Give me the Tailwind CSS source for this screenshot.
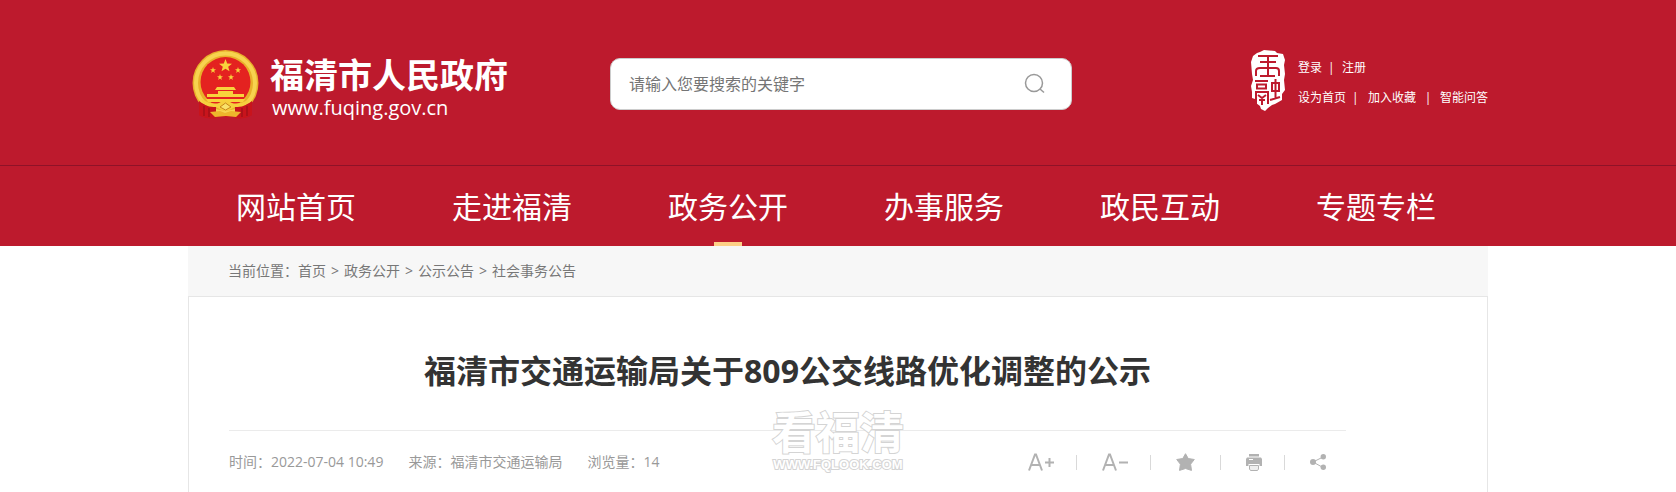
<!DOCTYPE html>
<html lang="zh-CN">
<head>
    <meta charset="UTF-8">
    <meta name="viewport" content="width=device-width, initial-scale=1.0">
    <title>福清市交通运输局关于809公交线路优化调整的公示</title>
    <script src="https://cdn.jsdelivr.net/npm/@tailwindcss/browser@4"></script>
</head>
<body class="bg-white font-['Open_Sans','Noto_Sans_CJK_SC',sans-serif] text-sm text-[#333]">
    <header class="bg-[#bd1a2d] text-white">
        <!-- Logo, search and account links -->
        <div class="mx-auto flex h-[165px] max-w-[1300px] items-start">
            <a href="#" class="mt-[50px] ml-1 flex">
                <svg class="h-[69px] w-[67px] shrink-0" viewBox="0 0 67 69" aria-hidden="true">
                    <path d="M9 49 L58 49 L60 65 Q50 70 42 67 L24 67 Q16 70 7 65 Z" fill="#c8141c"/>
                    <circle cx="33.500" cy="33" r="33" fill="#e9b02b"/>
                    <circle cx="33.500" cy="33" r="29.500" fill="none" stroke="#f7d34f" stroke-width="4"/>
                    <circle cx="33.500" cy="32" r="25" fill="#e42220"/>
                    <path d="M7 51 Q14 57 24 56 L24 68 Q16 70 7 65 Z M60 51 Q53 57 43 56 L43 68 Q51 70 60 65 Z" fill="#c8141c"/>
                    <path d="M12 56 V66 M17 58 V67 M50 58 V67 M55 56 V66" stroke="#8f0f16" stroke-width="1"/>
                    <path d="M33.500 9 L35.200 13.500 L40 13.700 L36.200 16.700 L37.500 21.300 L33.500 18.700 L29.500 21.300 L30.800 16.700 L27 13.700 L31.800 13.500 Z" fill="#f8d23c"/>
                    <g fill="#f8d23c">
                        <path id="s" d="M21 17 L21.800 19.300 L24 19.300 L22.200 20.700 L22.900 23 L21 21.600 L19.100 23 L19.800 20.700 L18 19.300 L20.200 19.300 Z"/>
                        <use href="#s" x="25"/>
                        <use href="#s" x="7" y="7"/>
                        <use href="#s" x="18" y="7"/>
                    </g>
                    <path d="M25 37 H42 L44 40 H23 Z M26 41 H41 V44 H52 V47 H15 V44 H26 Z M14 49 H53 L51 52 H16 Z" fill="#f8d23c"/>
                    <path d="M9 49 Q20 55 27 53 Q33 48 40 53 Q47 55 58 49 Q55 58 43 57 Q33 64 24 57 Q12 58 9 49 Z" fill="#f6cf3d"/>
                    <path d="M28 57 L33.500 53 L39 57 L33.500 60 Z" fill="#f9e26a" stroke="#c9861a" stroke-width="1"/>
                    <path d="M18 62 L28 61 L33 63 L39 61 L49 62 L44 67 L34 66 L23 67 Z" fill="#eeb52c"/>
                </svg>
                <span class="ml-[11px] flex flex-col">
                    <strong class="text-[34px] leading-[50px] font-bold">福清市人民政府</strong>
                    <span class="ml-[2px] text-xl leading-4">www.fuqing.gov.cn</span>
                </span>
            </a>
            <form class="mt-[58px] ml-[102px] flex h-[52px] w-[462px] items-center rounded-[10px] border border-[#ccc] bg-white pr-6 pl-[18px]">
                <input type="text" aria-label="搜索关键字" placeholder="请输入您要搜索的关键字" class="h-full min-w-0 flex-1 text-base text-[#333] outline-none placeholder:text-[#757575]">
                <button type="button" aria-label="搜索" class="size-6">
                    <svg class="size-6" viewBox="0 0 24 24" fill="none" stroke="#999" stroke-width="1.500">
                        <circle cx="11" cy="11" r="8.500"/>
                        <path d="M17 17 L21 20.500"/>
                    </svg>
                </button>
            </form>
            <div class="mt-[50px] ml-auto flex">
                <svg class="h-[62px] w-9" viewBox="0 0 36 62" aria-hidden="true">
                    <path d="M7 3 L10 2 L14 0 L25 1 L27 3 L33 4 L35 10 L34 15 L35 24 L34 30 L35 40 L32 44 L32 50 L25 54 L22 55 L18 58 L15 61 L11 59 L10 56 L6 53 L5 49 L2 48 L2 42 L1 36 L3 30 L2 24 L1 12 L3 6 Z" fill="#fff"/>
                    <g fill="none" stroke="#bd1a2d" stroke-width="2">
                        <path d="M8 6 H28 M18 6 V26 M10 12 H26 M6 26 V21 Q6 18 10 18 H26 Q29 18 29 21 V26 M10 26 H25"/>
                        <path d="M5 31 H18 M7 34.500 H16 V38.500 H7 Z M6 54 V42 H18 V54 M8 45 L12 48 L16 45 M9 50 H15 M12 50 V55 M22 33 H29 V41 H22 Z M25.500 29 V49 M20 50 L30 47"/>
                    </g>
                </svg>
                <div class="ml-3 flex flex-col pt-[3px] text-xs leading-[30px]">
                    <div class="flex">
                        <a href="#">登录</a><span class="w-5 pl-1.5">|</span><a href="#">注册</a>
                    </div>
                    <div class="flex">
                        <a href="#">设为首页</a><span class="w-[22px] pl-1.5">|</span><a href="#">加入收藏</a><span class="w-6 text-center">|</span><a href="#">智能问答</a>
                    </div>
                </div>
            </div>
        </div>

        <!-- Main navigation -->
        <nav class="border-t border-[#8f1228]">
            <ul class="mx-auto flex h-20 max-w-[1300px] pr-1 text-center text-[30px] leading-[82px]">
                <li class="flex-1"><a href="#">网站首页</a></li>
                <li class="flex-1"><a href="#">走进福清</a></li>
                <li class="relative flex-1">
                    <a href="#">政务公开</a>
                    <span class="absolute top-[76px] left-1/2 h-1 w-7 -translate-x-1/2 bg-[#fdd087]"></span>
                </li>
                <li class="flex-1"><a href="#">办事服务</a></li>
                <li class="flex-1"><a href="#">政民互动</a></li>
                <li class="flex-1"><a href="#">专题专栏</a></li>
            </ul>
        </nav>
    </header>

    <main class="mx-auto max-w-[1300px]">
        <div class="flex h-[50px] items-center gap-[5px] bg-[#f7f7f7] px-10 text-[#777]">
            <span>当前位置：<a href="#">首页</a></span>
            <span>&gt;</span>
            <a href="#">政务公开</a>
            <span>&gt;</span>
            <a href="#">公示公告</a>
            <span>&gt;</span>
            <a href="#">社会事务公告</a>
        </div>

        <article class="relative min-h-[196px] border border-b-0 border-[#e6e6e6] pt-[50px] pr-[141px] pl-10">
            <h1 class="text-center text-[32px] leading-[48px] font-bold">福清市交通运输局关于809公交线路优化调整的公示</h1>

            <div class="mt-[35px] flex items-center justify-between border-t border-[#ebebeb] pt-[19px] text-[#999]">
                <div class="flex gap-[25px] leading-6">
                    <span>时间：2022-07-04 10:49</span>
                    <span>来源：福清市交通运输局</span>
                    <span>浏览量：14</span>
                </div>

                <!-- Reading tools -->
                <div class="flex items-center gap-[22px] pr-5 text-[#b2b2b2]">
                    <button type="button" aria-label="放大字体">
                        <svg class="h-[18px] w-[26px]" viewBox="0 0 26 18" fill="none" stroke="currentColor" stroke-width="2">
                            <path d="M1 17.500 L7 1.500 H8 L14 17.500 M3.500 12 H11.500 M17 9.500 H26 M21.500 5 V14"/>
                        </svg>
                    </button>
                    <span class="h-[15px] w-px bg-[#d9d9d9]"></span>
                    <button type="button" aria-label="缩小字体" class="ml-[3px]">
                        <svg class="h-[18px] w-[26px]" viewBox="0 0 26 18" fill="none" stroke="currentColor" stroke-width="2">
                            <path d="M1 17.500 L7 1.500 H8 L14 17.500 M3.500 12 H11.500 M17 9.500 H26"/>
                        </svg>
                    </button>
                    <span class="h-[15px] w-px bg-[#d9d9d9]"></span>
                    <button type="button" aria-label="收藏" class="ml-[3px]">
                        <svg class="h-[18px] w-[19px]" viewBox="0 0 19 18" fill="currentColor" stroke="currentColor" stroke-linejoin="round">
                            <path d="M9.500 0.700 L12.200 5.500 L18.300 6.500 L14.600 11.200 L15.500 17.400 L9.500 15.500 L3.500 17.400 L4.400 11.200 L0.700 6.500 L6.800 5.500 Z"/>
                        </svg>
                    </button>
                    <span class="ml-[3px] h-[15px] w-px bg-[#d9d9d9]"></span>
                    <button type="button" aria-label="打印" class="ml-[3px]">
                        <svg class="h-[17px] w-4" viewBox="0 0 16 17" fill="currentColor">
                            <path d="M3 0 H13 V2.500 H3 Z M1 3.500 H15 L16 5 V12 H13.500 V10 H2.500 V12 H0 V5 Z"/>
                            <path d="M3 5.500 H7" stroke="#fff" stroke-width="1"/>
                            <path d="M3.500 11.500 H12.500 V15 L11.500 16.500 H4.500 L3.500 15 Z" fill="#eee" stroke="currentColor"/>
                        </svg>
                    </button>
                    <span class="h-[15px] w-px bg-[#d9d9d9]"></span>
                    <button type="button" aria-label="分享" class="ml-[3px]">
                        <svg class="size-4" viewBox="0 0 16 16" fill="currentColor">
                            <path d="M13 3 L3 8 L13 13.500" fill="none" stroke="currentColor"/>
                            <circle cx="3" cy="8" r="3"/><circle cx="13.300" cy="2.700" r="2.700"/><circle cx="13.300" cy="13.300" r="2.700"/>
                        </svg>
                    </button>
                </div>
            </div>

            <!-- Watermark -->
            <div class="pointer-events-none absolute top-[110px] left-1/2 flex -translate-x-1/2 flex-col items-center font-bold whitespace-nowrap text-white [-webkit-text-stroke:2px_#d4d4d4] [paint-order:stroke_fill]">
                <span class="text-[44px] leading-[50px]">看福清</span>
                <span class="font-['Liberation_Sans',sans-serif] text-[13px] leading-4">WWW.FQLOOK.COM</span>
            </div>
        </article>
    </main>
</body>
</html>
